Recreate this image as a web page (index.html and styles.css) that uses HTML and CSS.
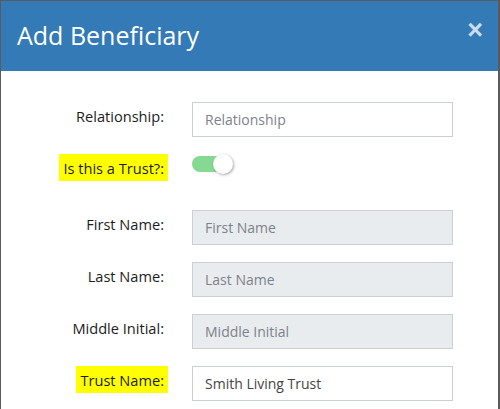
FILE: index.html
```html
<!DOCTYPE html>
<html>
<head>
<meta charset="utf-8">
<link rel="stylesheet" href="styles.css">
</head>
<body>
<div class="modal">
  <div class="modal-header">
    <h1 class="title">Add Beneficiary</h1>
    <span class="close">&times;</span>
  </div>
  <div class="modal-body">
    <form class="form">
      <div class="row">
        <label class="lbl"><span>Relationship:</span></label>
        <input class="field" type="text" placeholder="Relationship">
      </div>
      <div class="row row-toggle">
        <label class="lbl"><span class="hl">Is this a Trust?:</span></label>
        <div class="switch"><span class="knob"></span></div>
      </div>
      <div class="row">
        <label class="lbl"><span>First Name:</span></label>
        <input class="field disabled" type="text" placeholder="First Name" disabled>
      </div>
      <div class="row">
        <label class="lbl"><span>Last Name:</span></label>
        <input class="field disabled" type="text" placeholder="Last Name" disabled>
      </div>
      <div class="row">
        <label class="lbl"><span>Middle Initial:</span></label>
        <input class="field disabled" type="text" placeholder="Middle Initial" disabled>
      </div>
      <div class="row">
        <label class="lbl"><span class="hl">Trust Name:</span></label>
        <input class="field" type="text" value="Smith Living Trust">
      </div>
    </form>
  </div>
</div>
</body>
</html>
```

FILE: styles.css
```css
html, body {
  margin: 0;
  padding: 0;
  height: 100%;
}
body {
  background: #5b5b5b;
  font-family: "Open Sans", "Liberation Sans", sans-serif;
  overflow: hidden;
}
.modal {
  margin: 1px 2px 0 1px;
  background: #fff;
  height: 408px;
}
.modal-header {
  background: #337ab7;
  height: 70px;
  display: flex;
  align-items: center;
  justify-content: space-between;
  padding: 0 15px 0 16px;
}
.title {
  margin: 0;
  color: #fff;
  font-weight: 400;
  font-size: 25px;
  line-height: 30px;
  position: relative;
  top: -1px;
}
.close {
  color: rgba(255, 255, 255, 0.75);
  font-weight: 700;
  font-size: 27px;
  line-height: 20px;
  align-self: flex-start;
  margin-top: 19px;
  font-family: "Liberation Sans", sans-serif;
}
.modal-body {
  padding-top: 31px;
}
.form {
  display: flex;
  flex-direction: column;
  gap: 17px;
}
.row {
  display: grid;
  grid-template-columns: 167px 261px;
  column-gap: 24px;
  align-items: start;
}
.row-toggle {
  height: 39px;
}
.lbl {
  text-align: right;
  font-size: 14.6px;
  font-weight: 500;
  line-height: 20px;
  color: #1c1c1c;
}
.lbl span {
  display: inline-block;
  padding: 4px 4px 3px;
}
.lbl .hl {
  background: #ffff00;
}
.field {
  box-sizing: border-box;
  height: 35px;
  width: 261px;
  margin: 0;
  border: 1px solid #ccd0d6;
  padding: 0 12px;
  font-family: "Open Sans", "Liberation Sans", sans-serif;
  font-size: 14px;
  color: #444;
  background: #fff;
  outline: none;
}
.field::placeholder {
  color: #7d8289;
}
.field.disabled {
  background: #e9ecef;
}
.switch {
  position: relative;
  width: 38px;
  height: 16px;
  margin-top: 2px;
  border-radius: 8px;
  background: #86d993;
}
.knob {
  position: absolute;
  right: -3px;
  top: -2px;
  width: 20px;
  height: 20px;
  border-radius: 50%;
  background: #fff;
  box-shadow: 1px 1px 3px rgba(0, 0, 0, 0.35);
}
```
